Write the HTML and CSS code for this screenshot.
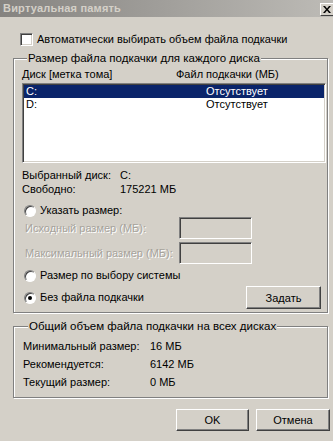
FILE: index.html
```html
<!DOCTYPE html>
<html lang="ru">
<head>
<meta charset="utf-8">
<title>Виртуальная память</title>
<link rel="stylesheet" href="styles.css">
</head>
<body>
<div class="win">
  <div class="title">
    <span class="title-text">Виртуальная память</span>
    <span class="close"><svg width="8" height="7" viewBox="0 0 8 7"><path d="M0 0h2l2 2.5L6 0h2L5 3.5 8 7H6L4 4.5 2 7H0l3-3.5z" fill="#000"/></svg></span>
  </div>
  <div class="client">
    <div class="chk-row"><span class="chk"></span><span>Автоматически выбирать объем файла подкачки</span></div>

    <fieldset class="group g1">
      <legend>Размер файла подкачки для каждого диска</legend>
      <div class="cols"><span class="h1">Диск [метка тома]</span><span>Файл подкачки (МБ)</span></div>
      <div class="list">
        <div class="row sel"><span class="c1">C:</span><span>Отсутствует</span></div>
        <div class="row"><span class="c1">D:</span><span>Отсутствует</span></div>
      </div>
      <div class="info first"><span class="k">Выбранный диск:</span><span>C:</span></div>
      <div class="info"><span class="k">Свободно:</span><span>175221 МБ</span></div>
      <div class="radio-row r1"><span class="radio"></span><span>Указать размер:</span></div>
      <div class="field-row"><span class="fl">Исходный размер (МБ):</span><span class="tb"></span></div>
      <div class="field-row f2"><span class="fl">Максимальный размер (МБ):</span><span class="tb"></span></div>
      <div class="radio-row r2"><span class="radio"></span><span>Размер по выбору системы</span></div>
      <div class="last-row">
        <div class="radio-row"><span class="radio on"></span><span>Без файла подкачки</span></div>
        <button class="btn set">Задать</button>
      </div>
    </fieldset>

    <fieldset class="group g2">
      <legend>Общий объем файла подкачки на всех дисках</legend>
      <div class="sum"><span class="k2">Минимальный размер:</span><span>16 МБ</span></div>
      <div class="sum"><span class="k2">Рекомендуется:</span><span>6142 МБ</span></div>
      <div class="sum"><span class="k2">Текущий размер:</span><span>0 МБ</span></div>
    </fieldset>

    <div class="buttons">
      <button class="btn ok">OK</button>
      <button class="btn cancel">Отмена</button>
    </div>
  </div>
</div>
</body>
</html>
```

FILE: styles.css
```css
html, body {
  margin: 0;
  padding: 0;
}
body {
  width: 333px;
  height: 441px;
  overflow: hidden;
  background: #d4d0c8;
  font-family: "Liberation Sans", Arial, sans-serif;
  font-size: 11px;
  color: #000;
  white-space: nowrap;
}
.win {
  width: 333px;
}
.title {
  height: 17px;
  display: flex;
  align-items: center;
  justify-content: space-between;
  background: linear-gradient(to right, #858380, #bdbbb6);
}
.title-text {
  padding-left: 3px;
  font-weight: bold;
  color: #d4d0c8;
  font-size: 11px;
  line-height: 17px;
  letter-spacing: 0.2px;
}
.close {
  width: 13px;
  height: 13px;
  margin-top: 1px;
  box-sizing: border-box;
  background: #d4d0c8;
  border-top: 1px solid #fff;
  border-left: 1px solid #fff;
  border-bottom: 1px solid #404040;
  display: flex;
  align-items: center;
  justify-content: center;
}
.client {
  padding-left: 13px;
}
.chk-row {
  margin-top: 16px;
  margin-left: 7px;
  height: 13px;
  display: flex;
  align-items: center;
  gap: 4px;
  line-height: 13px;
}
.chk {
  width: 13px;
  height: 13px;
  box-sizing: border-box;
  background: #fff;
  border-top: 1px solid #808080;
  border-left: 1px solid #808080;
  border-bottom: 1px solid #fff;
  border-right: 1px solid #fff;
  box-shadow: inset 1px 1px 0 #404040, inset -1px -1px 0 #d4d0c8;
}
.group {
  margin: 0;
  min-width: 0;
  box-sizing: border-box;
  border: 1px solid #808080;
  box-shadow: inset 1px 1px 0 #fff, 1px 1px 0 #fff;
}
.group legend {
  padding: 0 1px;
  margin-left: 5px;
  line-height: 14px;
  height: 14px;
  background: #d4d0c8;
  font-size: 11.5px;
}
.g1 {
  margin-top: 5px;
  width: 315px;
  padding: 2px 1px 3px 8px;
}
.cols {
  display: flex;
  line-height: 14px;
  height: 14px;
}
.h1 {
  width: 154px;
}
.list {
  margin-top: 2px;
  height: 80px;
  box-sizing: border-box;
  padding: 1px;
  background: #fff;
  border-top: 1px solid #808080;
  border-left: 1px solid #808080;
  border-bottom: 1px solid #fff;
  border-right: 1px solid #fff;
  box-shadow: inset 1px 1px 0 #404040, inset -1px -1px 0 #d4d0c8;
}
.row {
  display: flex;
  height: 13px;
  line-height: 13px;
  padding-left: 2px;
}
.row.sel {
  background: #0a246a;
  color: #fff;
}
.c1 {
  width: 180px;
}
.info {
  display: flex;
  height: 14px;
  line-height: 14px;
}
.info.first {
  margin-top: 5px;
}
.k {
  width: 98px;
}
.radio-row {
  display: flex;
  align-items: center;
  gap: 4px;
  height: 13px;
  line-height: 13px;
  margin-left: 2px;
}
.r1 {
  margin-top: 8px;
}
.r2 {
  margin-top: 5px;
}
.radio {
  width: 12px;
  height: 12px;
  box-sizing: border-box;
  border-radius: 50%;
  background: #fff;
  border: 1px solid;
  border-color: #808080 #fff #fff #808080;
  box-shadow: inset 1px 1px 0 #404040;
  position: relative;
}
.radio.on::after {
  content: "";
  position: absolute;
  left: 3px;
  top: 3px;
  width: 4px;
  height: 4px;
  border-radius: 50%;
  background: #000;
}
.field-row {
  display: flex;
  align-items: center;
  height: 22px;
  color: #a6a39c;
  text-shadow: 1px 1px 0 #fff;
}
.f2 {
  margin-top: 3px;
}
.fl {
  width: 154px;
  padding-left: 3px;
}
.tb {
  width: 73px;
  height: 22px;
  box-sizing: border-box;
  background: #d4d0c8;
  border-top: 1px solid #808080;
  border-left: 1px solid #808080;
  border-bottom: 1px solid #fff;
  border-right: 1px solid #fff;
  box-shadow: inset 1px 1px 0 #404040, inset -1px -1px 0 #d4d0c8;
}
.last-row {
  margin-top: 4px;
  height: 23px;
  display: flex;
  align-items: center;
  justify-content: space-between;
}
.btn {
  font-family: "Liberation Sans", Arial, sans-serif;
  font-size: 11px;
  color: #000;
  background: #d4d0c8;
  box-sizing: border-box;
  padding: 0;
  border-top: 1px solid #fff;
  border-left: 1px solid #fff;
  border-bottom: 1px solid #404040;
  border-right: 1px solid #404040;
  box-shadow: inset -1px -1px 0 #808080;
}
.set {
  width: 75px;
  height: 23px;
  margin-right: 5px;
}
.g2 {
  margin-top: 6px;
  width: 315px;
  padding: 6px 1px 8px 9px;
}
.sum {
  display: flex;
  height: 14px;
  line-height: 14px;
}
.sum + .sum {
  margin-top: 4px;
}
.k2 {
  width: 127px;
}
.buttons {
  margin-top: 11px;
  width: 317px;
  display: flex;
  justify-content: flex-end;
  gap: 7px;
}
.ok {
  width: 73px;
  height: 22px;
}
.cancel {
  width: 74px;
  height: 22px;
}
```
